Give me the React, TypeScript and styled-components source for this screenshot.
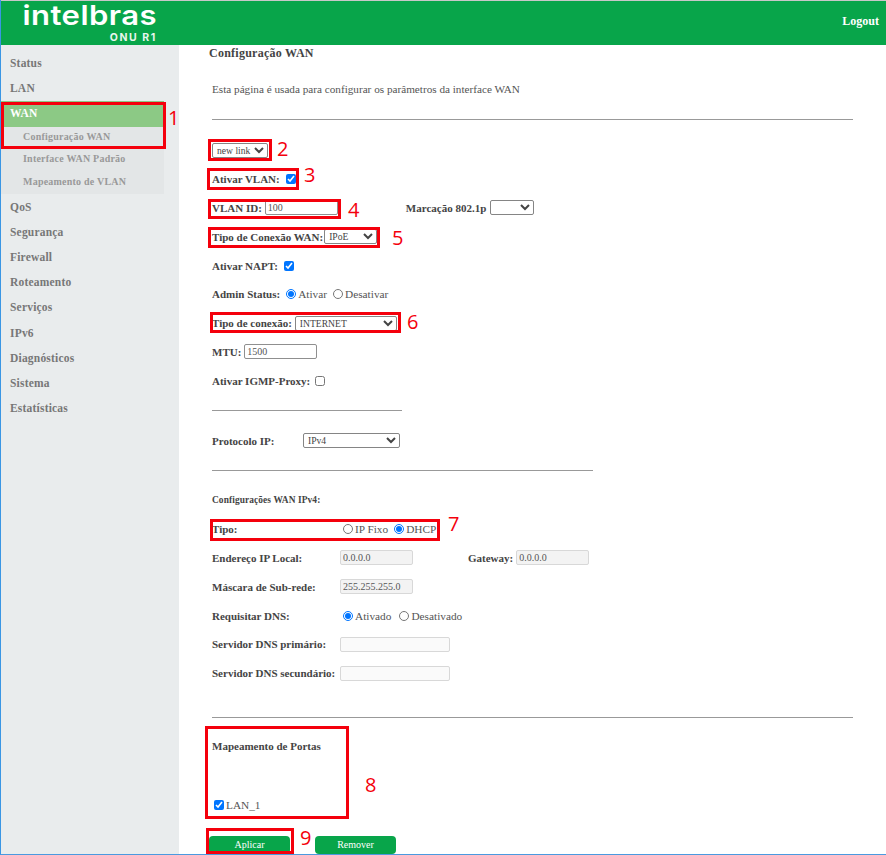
import React from 'react';
import styled, { createGlobalStyle } from 'styled-components';

const GlobalStyle = createGlobalStyle`
  html, body {
    margin: 0;
    padding: 0;
    background: #fff;
    font-family: "Liberation Serif", "Times New Roman", serif;
    color: #444;
  }
`;

const Page = styled.div`
  position: relative;
  width: 886px;
  height: 855px;
  overflow: hidden;
  background: #fff;
  border-left: 1px solid #3a96e4;
  border-bottom: 1px solid #4a9ae0;
  box-sizing: border-box;
`;

const Header = styled.header`
  height: 45px;
  box-sizing: border-box;
  background: #08a54a;
  border-top: 1px solid #c8c8c8;
  display: flex;
  align-items: flex-start;
  justify-content: space-between;
  padding: 0 7px 0 22px;
`;

const Logo = styled.div`
  display: flex;
  flex-direction: column;
  align-items: flex-end;
  color: #fff;
  font-family: Inter, "Noto Sans", sans-serif;
  width: 134px;
  white-space: nowrap;
`;

const LogoName = styled.div`
  font-size: 27px;
  font-weight: 600;
  line-height: 26px;
  letter-spacing: 0.4px;
  height: 26px;
  margin-top: 2px;
  transform: scaleX(1.15);
  transform-origin: right center;
`;

const LogoSub = styled.div`
  font-size: 10.5px;
  font-weight: 700;
  line-height: 11px;
  letter-spacing: 1.6px;
  margin-top: 3px;
  opacity: 0.9;
`;

const LogoutLink = styled.a`
  color: #fff;
  font-size: 12px;
  font-weight: 700;
  margin-top: 13px;
  line-height: 14px;
`;

const Body = styled.div`
  display: flex;
  height: 809px;
`;

const Sidebar = styled.nav`
  width: 178px;
  flex: none;
  background: #e9eced;
  padding-top: 6px;
  box-sizing: border-box;
`;

const MenuItem = styled.div<{ $active?: boolean }>`
  height: 25.2px;
  line-height: 25px;
  padding-left: 9px;
  width: 163px;
  box-sizing: border-box;
  font-size: 11.5px;
  font-weight: 700;
  letter-spacing: 0.2px;
  color: ${p => (p.$active ? '#fff' : '#777')};
  background: ${p => (p.$active ? '#8cc985' : 'transparent')};
`;

const SubMenu = styled.div`
  width: 163px;
  height: 67.5px;
  background: #e3e6e7;
  display: flex;
  flex-direction: column;
  margin-bottom: 0.6px;
`;

const SubItem = styled.div`
  height: 22.5px;
  line-height: 20px;
  padding-left: 22px;
  font-size: 10px;
  font-weight: 700;
  letter-spacing: 0.22px;
  color: #999;
`;

const Main = styled.main`
  flex: 1;
  min-width: 0;
  padding: 0 33px 0 33px;
`;

const Title = styled.h1`
  margin: 0 0 0 -3px;
  padding-top: 1px;
  font-size: 12px;
  line-height: 14px;
  font-weight: 700;
  letter-spacing: 0.25px;
  color: #444;
`;

const Intro = styled.p`
  margin: 22px 0 0;
  font-size: 11.2px;
  line-height: 14px;
  color: #555;
`;

const Rule = styled.hr<{ $width?: number; $before: number; $after: number }>`
  border: 0;
  height: 1px;
  background: #999;
  margin: ${p => p.$before}px 0 ${p => p.$after}px;
  width: ${p => (p.$width ? `${p.$width}px` : '100%')};
`;

const Row = styled.div<{ $h?: number }>`
  display: flex;
  align-items: center;
  height: ${p => p.$h ?? 28.8}px;
`;

const Label = styled.label<{ $w?: number }>`
  font-size: 11px;
  font-weight: 700;
  color: #444;
  white-space: nowrap;
  ${p => (p.$w ? `width: ${p.$w}px; flex: none;` : '')}
`;

const SmallHeading = styled.div`
  font-size: 9.4px;
  font-weight: 700;
  color: #444;
  letter-spacing: 0.1px;
`;

const Select = styled.select<{ $w: number; $ml?: number }>`
  width: ${p => p.$w}px;
  height: 15px;
  margin: 0 0 0 ${p => p.$ml ?? 0}px;
  padding: 0;
  border: 1px solid #858585;
  border-radius: 2px;
  font-family: "Liberation Serif", serif;
  font-size: 9.6px;
  color: #444;
  background: #fff;
  box-sizing: border-box;
`;

const TextInput = styled.input<{ $w: number; $ml?: number }>`
  width: ${p => p.$w}px;
  height: 15px;
  margin: 0 0 0 ${p => p.$ml ?? 0}px;
  padding: 0 2px;
  box-sizing: border-box;
  border: 1px solid #8f8f8f;
  border-radius: 2px;
  font-family: "Liberation Serif", serif;
  font-size: 10px;
  color: #555;
  background: #fff;
`;

const ReadOnlyInput = styled(TextInput)`
  border-color: #d8d8d8;
  background: #f3f3f3;
`;

const EmptyInput = styled(ReadOnlyInput)`
  background: #fafafa;
`;

const Check = styled.input.attrs({ type: 'checkbox' })<{ $ml?: number }>`
  width: 10px;
  height: 10px;
  margin: 0 0 0 ${p => p.$ml ?? 5}px;
`;

const Radio = styled.input.attrs({ type: 'radio' })<{ $ml?: number }>`
  width: 10px;
  height: 10px;
  margin: 0 2px 0 ${p => p.$ml ?? 0}px;
`;

const OptionText = styled.span`
  font-size: 11.3px;
  color: #555;
`;

const PortName = styled(OptionText)`
  margin-left: 2px;
`;

const Spacer = styled.div<{ $w: number }>`
  width: ${p => p.$w}px;
  flex: none;
`;

const Actions = styled.div`
  display: flex;
  gap: 25px;
  margin: 0 0 0 -3px;
`;

const GreenButton = styled.button`
  width: 81px;
  height: 18px;
  padding: 0;
  border: 0;
  border-radius: 4px;
  background: #08a54a;
  color: #fff;
  font-family: "Liberation Serif", serif;
  font-size: 10px;
  font-weight: 400;
`;

/* annotations drawn on top of the screenshot */
const Mark = styled.div<{ $x: number; $y: number; $w: number; $h: number }>`
  position: absolute;
  left: ${p => p.$x}px;
  top: ${p => p.$y}px;
  width: ${p => p.$w}px;
  height: ${p => p.$h}px;
  box-sizing: border-box;
  border: 3px solid #f4000c;
  pointer-events: none;
`;

const MarkNumber = styled.span<{ $x: number; $y: number }>`
  position: absolute;
  left: ${p => p.$x}px;
  top: ${p => p.$y}px;
  font-family: "Open Sans", "Liberation Sans", sans-serif;
  font-size: 20px;
  line-height: 20px;
  color: #f4000c;
`;

// page is shifted 1px by the left edge line, so marks are given from there
const marks = [
  { n: 1, x: 0, y: 102, w: 165, h: 47, nx: 167, ny: 108 },
  { n: 2, x: 207, y: 139, w: 64, h: 22, nx: 276, ny: 139 },
  { n: 3, x: 206, y: 168, w: 92, h: 22, nx: 303, ny: 165 },
  { n: 4, x: 207, y: 199, w: 133, h: 20, nx: 347, ny: 200 },
  { n: 5, x: 207, y: 227, w: 172, h: 21, nx: 391, ny: 228 },
  { n: 6, x: 209, y: 312, w: 191, h: 21, nx: 406, ny: 312 },
  { n: 7, x: 209, y: 519, w: 230, h: 22, nx: 447, ny: 514 },
  { n: 8, x: 204, y: 726, w: 144, h: 93, nx: 364, ny: 775 },
  { n: 9, x: 205, y: 828, w: 88, h: 26, nx: 299, ny: 828 },
];

const topItems = ['Status', 'LAN'];
const bottomItems = ['QoS', 'Segurança', 'Firewall', 'Roteamento', 'Serviços', 'IPv6', 'Diagnósticos', 'Sistema', 'Estatísticas'];

export default function App() {
  return (
    <Page>
      <GlobalStyle />
      <Header>
        <Logo>
          <LogoName>intelbras</LogoName>
          <LogoSub>ONU R1</LogoSub>
        </Logo>
        <LogoutLink>Logout</LogoutLink>
      </Header>
      <Body>
        <Sidebar>
          {topItems.map(item => <MenuItem key={item}>{item}</MenuItem>)}
          <MenuItem $active>WAN</MenuItem>
          <SubMenu>
            <SubItem>Configuração WAN</SubItem>
            <SubItem>Interface WAN Padrão</SubItem>
            <SubItem>Mapeamento de VLAN</SubItem>
          </SubMenu>
          {bottomItems.map(item => <MenuItem key={item}>{item}</MenuItem>)}
        </Sidebar>
        <Main>
          <Title>Configuração WAN</Title>
          <Intro>Esta página é usada para configurar os parâmetros da interface WAN</Intro>
          <Rule $before={23} $after={16} />
          <Row>
            <Select $w={56} defaultValue="new"><option value="new">new link</option></Select>
          </Row>
          <Row>
            <Label>Ativar VLAN:</Label>
            <Check $ml={6} defaultChecked />
          </Row>
          <Row>
            <Label>VLAN ID:</Label>
            <TextInput $w={73} $ml={3} defaultValue="100" />
            <Spacer $w={68} />
            <Label>Marcação 802.1p</Label>
            <Select $w={44} $ml={4} />
          </Row>
          <Row>
            <Label>Tipo de Conexão WAN:</Label>
            <Select $w={53} $ml={1}><option>IPoE</option></Select>
          </Row>
          <Row>
            <Label>Ativar NAPT:</Label>
            <Check $ml={6} defaultChecked />
          </Row>
          <Row>
            <Label>Admin Status:</Label>
            <Radio $ml={6} name="admin" defaultChecked />
            <OptionText>Ativar</OptionText>
            <Radio $ml={6} name="admin" />
            <OptionText>Desativar</OptionText>
          </Row>
          <Row>
            <Label>Tipo de conexão:</Label>
            <Select $w={102} $ml={3}><option>INTERNET</option></Select>
          </Row>
          <Row>
            <Label>MTU:</Label>
            <TextInput $w={73} $ml={3} defaultValue="1500" />
          </Row>
          <Row>
            <Label>Ativar IGMP-Proxy:</Label>
            <Check />
          </Row>
          <Rule $width={190} $before={15} $after={15} />
          <Row>
            <Label $w={91}>Protocolo IP:</Label>
            <Select $w={97}><option>IPv4</option></Select>
          </Row>
          <Rule $width={381} $before={15} $after={15} />
          <Row>
            <SmallHeading>Configurações WAN IPv4:</SmallHeading>
          </Row>
          <Row>
            <Label $w={131}>Tipo:</Label>
            <Radio name="ipmode" />
            <OptionText>IP Fixo</OptionText>
            <Radio $ml={6} name="ipmode" defaultChecked />
            <OptionText>DHCP</OptionText>
          </Row>
          <Row>
            <Label $w={128}>Endereço IP Local:</Label>
            <ReadOnlyInput $w={73} defaultValue="0.0.0.0" readOnly />
            <Spacer $w={55} />
            <Label>Gateway:</Label>
            <ReadOnlyInput $w={73} $ml={3} defaultValue="0.0.0.0" readOnly />
          </Row>
          <Row>
            <Label $w={128}>Máscara de Sub-rede:</Label>
            <ReadOnlyInput $w={73} defaultValue="255.255.255.0" readOnly />
          </Row>
          <Row>
            <Label $w={131}>Requisitar DNS:</Label>
            <Radio name="dns" defaultChecked />
            <OptionText>Ativado</OptionText>
            <Radio $ml={8} name="dns" />
            <OptionText>Desativado</OptionText>
          </Row>
          <Row>
            <Label $w={128}>Servidor DNS primário:</Label>
            <EmptyInput $w={110} />
          </Row>
          <Row>
            <Label $w={128}>Servidor DNS secundário:</Label>
            <EmptyInput $w={110} />
          </Row>
          <Rule $before={29} $after={14} />
          <Row $h={28}>
            <Label>Mapeamento de Portas</Label>
          </Row>
          <Row $h={31} />
          <Row $h={28}>
            <Check $ml={2} defaultChecked />
            <PortName>LAN_1</PortName>
          </Row>
          <Row $h={14} />
          <Row $h={24}>
            <Actions>
              <GreenButton>Aplicar</GreenButton>
              <GreenButton>Remover</GreenButton>
            </Actions>
          </Row>
        </Main>
      </Body>
      {marks.map(m => (
        <React.Fragment key={m.n}>
          <Mark $x={m.x} $y={m.y} $w={m.w} $h={m.h} />
          <MarkNumber $x={m.nx} $y={m.ny}>{m.n}</MarkNumber>
        </React.Fragment>
      ))}
    </Page>
  );
}
